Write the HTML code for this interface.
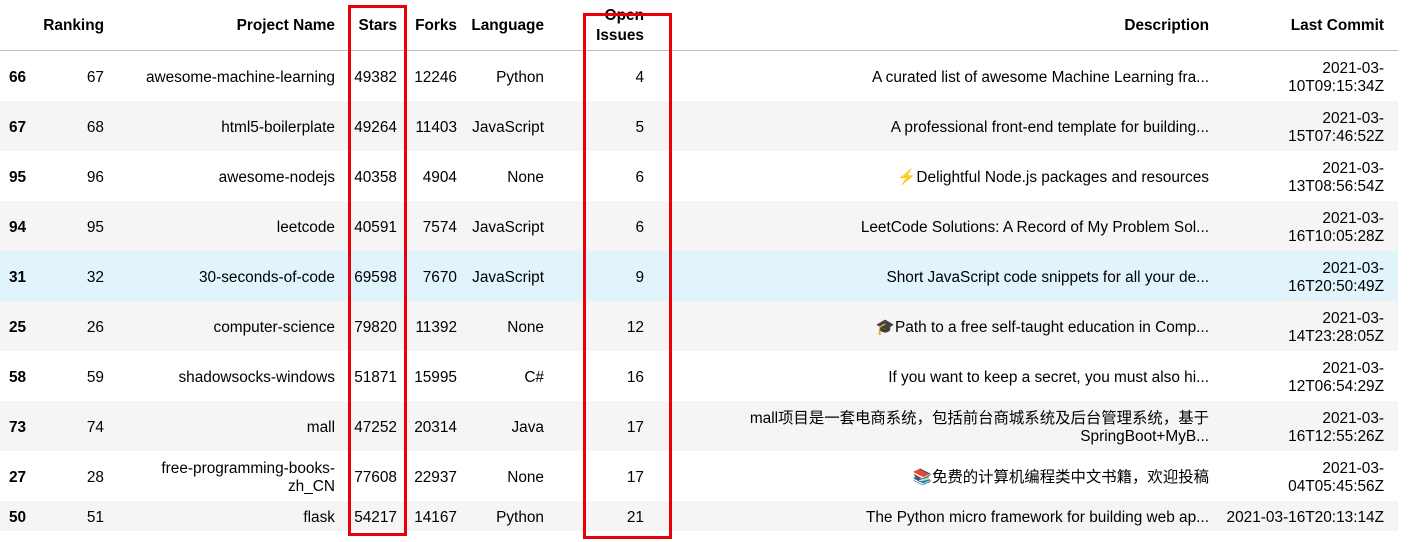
<!DOCTYPE html>
<html><head><meta charset="utf-8"><style>
body{margin:0;width:1425px;height:542px;background:#fff;font-family:"Liberation Sans","Noto Sans CJK SC",sans-serif;font-size:15.4px;color:#000;position:relative;overflow:hidden}
.row{position:absolute;left:0;width:1398px}
.c{position:absolute;text-align:right;white-space:nowrap;line-height:18px}
.h{font-weight:bold}
.box{position:absolute;border:3px solid #e8000b;box-sizing:border-box}
</style></head><body>
<div style="position:absolute;left:0;top:50px;width:1398px;height:1px;background:#bdbdbd"></div>
<div id="t"></div>
<div class="c h" style="right:1321px;top:17px">Ranking</div>
<div class="c h" style="right:1090px;top:17px">Project Name</div>
<div class="c h" style="right:1028px;top:17px">Stars</div>
<div class="c h" style="right:968px;top:17px">Forks</div>
<div class="c h" style="right:881px;top:17px">Language</div>
<div class="c h" style="right:781px;top:6px;line-height:20px">Open<br>Issues</div>
<div class="c h" style="right:216px;top:17px">Description</div>
<div class="c h" style="right:41px;top:17px">Last Commit</div>
<script>
var d=[
["66","67","awesome-machine-learning","49382","12246","Python","4","A curated list of awesome Machine Learning fra...","2021-03-<br>10T09:15:34Z"],
["67","68","html5-boilerplate","49264","11403","JavaScript","5","A professional front-end template for building...","2021-03-<br>15T07:46:52Z"],
["95","96","awesome-nodejs","40358","4904","None","6","⚡Delightful Node.js packages and resources","2021-03-<br>13T08:56:54Z"],
["94","95","leetcode","40591","7574","JavaScript","6","LeetCode Solutions: A Record of My Problem Sol...","2021-03-<br>16T10:05:28Z"],
["31","32","30-seconds-of-code","69598","7670","JavaScript","9","Short JavaScript code snippets for all your de...","2021-03-<br>16T20:50:49Z"],
["25","26","computer-science","79820","11392","None","12","🎓Path to a free self-taught education in Comp...","2021-03-<br>14T23:28:05Z"],
["58","59","shadowsocks-windows","51871","15995","C#","16","If you want to keep a secret, you must also hi...","2021-03-<br>12T06:54:29Z"],
["73","74","mall","47252","20314","Java","17","mall项目是一套电商系统，包括前台商城系统及后台管理系统，基于<br>SpringBoot+MyB...","2021-03-<br>16T12:55:26Z"],
["27","28","free-programming-books-<br>zh_CN","77608","22937","None","17","📚免费的计算机编程类中文书籍，欢迎投稿","2021-03-<br>04T05:45:56Z"],
["50","51","flask","54217","14167","Python","21","The Python micro framework for building web ap...","2021-03-16T20:13:14Z"]];
var R=[1321,1090,1028,968,881,781,216,41],h="";
d.forEach(function(r,i){
 var top=51+50*i,H=i==9?30:50;
 var bg=i==4?"#e1f3fb":(i%2==1?"#f5f5f5":"#fff");
 h+='<div class="row" style="top:'+top+'px;height:'+H+'px;background:'+bg+'">';
 h+='<div class="c h" style="left:9px;right:auto;top:'+(H/2-7)+'px">'+r[0]+'</div>';
 for(var j=1;j<9;j++){var two=r[j].indexOf("<br>")>=0;
  h+='<div class="c" style="right:'+(R[j-1]-27)+'px;top:'+(two?H/2-16:H/2-7)+'px">'+r[j]+'</div>';}
 h+='</div>';});
document.getElementById("t").innerHTML=h;
</script>
<div class="box" style="left:348px;top:5px;width:59px;height:531px"></div>
<div class="box" style="left:583px;top:13px;width:89px;height:526px"></div>
</body></html>
